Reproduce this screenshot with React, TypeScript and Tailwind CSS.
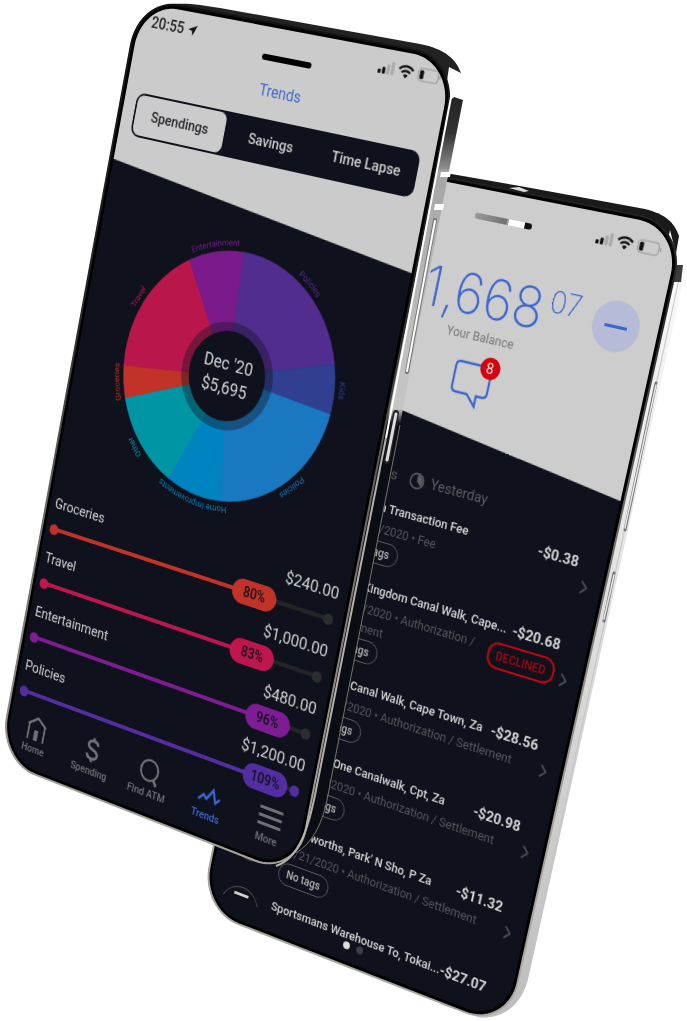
import type { CSSProperties, ReactNode } from "react";
import { ChevronRight } from "lucide-react";

type Point = [number, number];
type Quad = [Point, Point, Point, Point];

const SCREEN_W = 375;
const SCREEN_H = 812;

/** Coefficients that lay a flat screen on four corners: TL, TR, BR, BL. */
function solve([p0, p1, p2, p3]: Quad) {
  const [dx1, dy1] = [p1[0] - p2[0], p1[1] - p2[1]];
  const [dx2, dy2] = [p3[0] - p2[0], p3[1] - p2[1]];
  const sx = p0[0] - p1[0] + p2[0] - p3[0];
  const sy = p0[1] - p1[1] + p2[1] - p3[1];
  const det = dx1 * dy2 - dx2 * dy1;
  const g = (sx * dy2 - dx2 * sy) / det;
  const h = (dx1 * sy - sx * dy1) / det;
  return {
    ax: (p1[0] - p0[0] + g * p1[0]) / SCREEN_W,
    ay: (p1[1] - p0[1] + g * p1[1]) / SCREEN_W,
    aw: g / SCREEN_W,
    bx: (p3[0] - p0[0] + h * p3[0]) / SCREEN_H,
    by: (p3[1] - p0[1] + h * p3[1]) / SCREEN_H,
    bw: h / SCREEN_H,
    cx: p0[0],
    cy: p0[1],
  };
}

function perspective(corners: Quad): string {
  const k = solve(corners);
  return `matrix3d(${[k.ax, k.ay, 0, k.aw, k.bx, k.by, 0, k.bw, 0, 0, 1, 0, k.cx, k.cy, 0, 1].join(",")})`;
}

/** Outline of the rounded glass after projection, as an SVG path. */
function outline(corners: Quad, inset: number, radius: number): string {
  const k = solve(corners);
  const arcs: [number, number, number][] = [
    [inset + radius, inset + radius, 180],
    [SCREEN_W - inset - radius, inset + radius, 270],
    [SCREEN_W - inset - radius, SCREEN_H - inset - radius, 0],
    [inset + radius, SCREEN_H - inset - radius, 90],
  ];
  const points = arcs.flatMap(([cx, cy, start]) =>
    Array.from({ length: 19 }, (_, i) => {
      const a = ((start + i * 5) * Math.PI) / 180;
      const x = cx + radius * Math.cos(a);
      const y = cy + radius * Math.sin(a);
      const w = k.aw * x + k.bw * y + 1;
      return `${((k.ax * x + k.bx * y + k.cx) / w).toFixed(2)} ${((k.ay * x + k.by * y + k.cy) / w).toFixed(2)}`;
    }),
  );
  return `M${points.join("L")}Z`;
}

const FRONT: Quad = [[139, -3], [459, 57], [297, 878], [-2, 761]];
const BACK: Quad = [[352, 158], [687, 224], [508, 1030], [200, 910]];

function Device({ corners, children, label }: { corners: Quad; children: ReactNode; label: string }) {
  const style: CSSProperties = { transform: perspective(corners) };
  return (
    <section aria-label={label} style={style} className="absolute left-0 top-0 h-[812px] w-[375px] origin-top-left p-[4px]">
      <div className="relative flex h-full flex-col overflow-hidden rounded-[44px] bg-[#0f121c]">{children}</div>
    </section>
  );
}

function Bezel({ corners, id }: { corners: Quad; id: string }) {
  return (
    <svg viewBox="0 0 687 1021" className="pointer-events-none absolute left-0 top-0 h-[1021px] w-[687px]" aria-hidden="true" fill="none">
      <defs>
        <linearGradient id={id} x1="0" y1="0" x2="0" y2="1021" gradientUnits="userSpaceOnUse">
          <stop offset="0" stopColor="#111" />
          <stop offset="0.3" stopColor="#2a2a2a" />
          <stop offset="0.5" stopColor="#6d6a65" />
          <stop offset="0.8" stopColor="#a5a29c" />
          <stop offset="1" stopColor="#aaa7a2" />
        </linearGradient>
      </defs>
      <path d={outline(corners, 3, 46)} stroke="#000" strokeWidth="4" />
      <path d={outline(corners, 1, 48)} stroke={`url(#${id})`} strokeWidth="2" />
    </svg>
  );
}

function StatusIcons() {
  return (
    <div className="flex items-center gap-[4px]">
      <svg viewBox="0 0 18 14" className="h-[14px] w-[18px]" aria-hidden="true">
        <rect x="0" y="9" width="3.4" height="4" rx="1" fill="#111" />
        <rect x="4.8" y="6.5" width="3.4" height="6.5" rx="1" fill="#111" />
        <rect x="9.6" y="3.5" width="3.4" height="9.5" rx="1" fill="#aaa" />
        <rect x="14.4" y="0.5" width="3.4" height="12.5" rx="1" fill="#aaa" />
      </svg>
      <svg viewBox="0 0 18 14" className="h-[14px] w-[18px]" aria-hidden="true" fill="none" stroke="#111" strokeWidth="2.2">
        <path d="M1.2 5.2a11 11 0 0 1 15.6 0" />
        <path d="M4.2 8.3a6.8 6.8 0 0 1 9.6 0" />
        <path d="M9 13.6 6.4 10.8a3.8 3.8 0 0 1 5.2 0Z" fill="#111" stroke="none" />
      </svg>
      <svg viewBox="0 0 28 14" className="h-[14px] w-[26px]" aria-hidden="true">
        <rect x="0.6" y="0.6" width="23.5" height="12.8" rx="3.6" fill="none" stroke="#999" strokeWidth="1.1" />
        <rect x="2.4" y="2.4" width="4.6" height="9.2" rx="1.6" fill="#111" />
        <path d="M25.4 4.6v4.8c1.2-.4 1.9-1.3 1.9-2.4s-.7-2-1.9-2.4Z" fill="#999" />
      </svg>
    </div>
  );
}

const SLICES = [
  { name: "Policies", from: -3.5, to: 71.8, color: "#512d8f" },
  { name: "Kids", from: 71.8, to: 94.4, color: "#303f90" },
  { name: "Policies", from: 94.4, to: 170.5, color: "#1a78c0" },
  { name: "Home Improvements", from: 170.5, to: 201.2, color: "#0084c1" },
  { name: "Other", from: 201.2, to: 246.7, color: "#0095a5" },
  { name: "Groceries", from: 246.7, to: 262, color: "#c13329" },
  { name: "Travel", from: 262, to: 326.6, color: "#b9174c" },
  { name: "Entertainment", from: 326.6, to: 356.5, color: "#7b1b8b" },
];

function wedge(from: number, to: number, r: number): string {
  const at = (deg: number) => {
    const a = ((deg - 90) * Math.PI) / 180;
    return `${(r * Math.cos(a)).toFixed(2)} ${(r * Math.sin(a)).toFixed(2)}`;
  };
  return `M0 0L${at(from)}A${r} ${r} 0 0 1 ${at(to)}Z`;
}

function SpendingWheel() {
  return (
    <div className="relative mx-auto -mt-[2px] grid size-[290px] shrink-0 place-items-center">
      <svg viewBox="-145 -145 290 290" className="absolute inset-0" role="img" aria-label="Spending by category">
        <defs>
          <path id="label-ring" d="M0 130A130 130 0 0 1 0 -130A130 130 0 0 1 0 130" />
        </defs>
        {SLICES.map((s) => (
          <path key={s.from} d={wedge(s.from, s.to, 124.5)} fill={s.color} stroke={s.color} strokeWidth="0.8" />
        ))}
        <circle r="54" fill="#0f121c" fillOpacity="0.38" />
        <circle r="45" fill="#0f121c" />
        {SLICES.map((s) => (
          <g key={s.from} transform={`rotate(${(s.from + s.to) / 2})`}>
            <text fill={s.color} fontSize="9" textAnchor="middle">
              <textPath href="#label-ring" startOffset="50%">{s.name}</textPath>
            </text>
          </g>
        ))}
      </svg>
      <p className="relative text-center text-[18px] leading-[24px] text-[#d2d2d2]">
        Dec &apos;20
        <br />
        $5,695
      </p>
    </div>
  );
}

const BUDGETS = [
  { name: "Groceries", amount: "$240.00", pct: "80%", tone: "bg-[#c13329]", width: "w-[81%]", end: "bg-[#2c2d2c]" },
  { name: "Travel", amount: "$1,000.00", pct: "83%", tone: "bg-[#c0164e]", width: "w-[84%]", end: "bg-[#2c2d2c]" },
  { name: "Entertainment", amount: "$480.00", pct: "96%", tone: "bg-[#7d1c93]", width: "w-[93%]", end: "bg-[#2c2d2c]" },
  { name: "Policies", amount: "$1,200.00", pct: "109%", tone: "bg-[#542da0]", width: "w-[96%]", end: "bg-[#542da0]" },
];

function BudgetList() {
  return (
    <ul className="absolute left-[8px] right-[12px] top-[513px]">
      {BUDGETS.map((b) => (
        <li key={b.name} className="h-[58px]">
          <div className="flex items-center justify-between text-[#cfcfcf]">
            <span className="text-[15px] leading-[24px]">{b.name}</span>
            <span className="-mr-[1px] text-[17px] leading-[24px]">{b.amount}</span>
          </div>
          <div className="relative mt-[3px] flex h-[24px] items-center">
            <div className="absolute left-1 right-1 h-[4px] bg-[#232426]" />
            <div className={`absolute right-0 size-[11px] rounded-full ${b.end}`} />
            <div className={`relative flex h-[4px] items-center justify-between ${b.width} ${b.tone}`}>
              <span className={`-ml-[1px] size-[11px] rounded-full ${b.tone}`} />
              <span className={`grid h-[25px] w-[52px] place-items-center rounded-full text-[14px] font-medium text-[#0f121c] ${b.tone}`}>
                {b.pct}
              </span>
            </div>
          </div>
        </li>
      ))}
    </ul>
  );
}

function NavItem({ label, active, children }: { label: string; active?: boolean; children: ReactNode }) {
  return (
    <a
      href="#"
      className={`flex flex-1 flex-col items-center gap-[2px] text-[11px] leading-[14px] font-medium ${active ? "text-[#3a68d8]" : "text-[#707176]"}`}
    >
      <svg viewBox="0 0 30 28" className="h-[28px] w-[30px]" fill="none" stroke="currentColor" strokeWidth="2.2" aria-hidden="true">
        {children}
      </svg>
      {label}
    </a>
  );
}

function TrendsScreen() {
  return (
    <>
      <header className="h-[206px] shrink-0 bg-[#cbcbcb] [clip-path:polygon(0_0,100%_0,100%_100%,0_79%)]">
        <div className="flex items-center justify-between pl-[17px] pr-[10px] pt-[9px]">
          <span className="flex items-center gap-1 text-[16px] leading-[20px] font-medium text-[#222]">
            20:55
            <svg viewBox="0 0 12 12" className="size-[12px]" aria-hidden="true">
              <path d="M11.5.5.8 5.4l4.7 1.1 1.1 4.9Z" fill="#111" />
            </svg>
          </span>
          <StatusIcons />
        </div>
        <div className="mx-auto -mt-[1px] h-[6px] w-[58px] rounded-full bg-black" />
        <h1 className="mt-[18px] text-center text-[16px] leading-[24px] text-[#4069cf]">Trends</h1>
        <div role="tablist" className="mx-[16px] mt-[15px] grid h-[45px] grid-cols-3 rounded-[10px] bg-[#0f121c] p-[2px] text-[15px] font-medium text-[#cbcbcb]">
          <button role="tab" aria-selected="true" className="rounded-[8px] bg-[#cbcbcb] text-[#26272c]">Spendings</button>
          <button role="tab" aria-selected="false">Savings</button>
          <button role="tab" aria-selected="false">Time Lapse</button>
        </div>
      </header>
      <SpendingWheel />
      <BudgetList />
      <nav className="absolute inset-x-0 bottom-[14px] flex pr-[2px]">
        <NavItem label="Home">
          <path d="M5 27V10L15 3l10 7v17" />
          <path d="M3.5 11 15 3l11.5 8" />
          <path d="M12.5 27V16h5v11" fill="currentColor" stroke="none" />
        </NavItem>
        <NavItem label="Spending">
          <path d="M21 9c-.6-2.7-2.8-4.2-6-4.2-3.4 0-5.8 1.7-5.8 4.5 0 6.3 12.1 3 12.1 9.5 0 3-2.7 4.7-6.2 4.7-3.7 0-6-1.7-6.5-4.7M15 1.5V5M15 23.5V27" strokeWidth="3" />
        </NavItem>
        <NavItem label="Find ATM">
          <circle cx="14" cy="13" r="10.5" />
          <path d="m20 21 4.5 6" strokeWidth="3" />
        </NavItem>
        <NavItem label="Trends" active>
          <path d="m3 22 5.5-6 4 3.5L19 9l4.5 12 4.5-5" strokeWidth="2.5" />
        </NavItem>
        <NavItem label="More">
          <path d="M1.5 6.5h27M1.5 14.5h27M1.5 22.5h27" strokeWidth="3.2" />
        </NavItem>
      </nav>
    </>
  );
}

const TRANSACTIONS = [
  { title: "Admin Transaction Fee", detail: "14/12/2020 • Fee", amount: "-$0.38" },
  { title: "Toys Kingdom Canal Walk, Cape...", detail: "12/12/2020 • Authorization / Settlement", amount: "-$20.68", declined: true },
  { title: "Clicks Canal Walk, Cape Town, Za", detail: "12/12/2020 • Authorization / Settlement", amount: "-$28.56" },
  { title: "Game One Canalwalk, Cpt, Za", detail: "11/12/2020 • Authorization / Settlement", amount: "-$20.98" },
  { title: "Woolworths, Park' N Sho, P Za", detail: "11/21/2020 • Authorization / Settlement", amount: "-$11.32" },
];

function BalanceScreen() {
  return (
    <>
      <header className="h-[268px] shrink-0 bg-[#cdcdcd] [clip-path:polygon(0_0,100%_0,100%_100%,0_82%)]">
        <div className="flex justify-end pr-[15px] pt-[18px]">
          <StatusIcons />
        </div>
        <div className="mx-auto -mt-[7px] flex w-[64px] -translate-x-1 overflow-hidden rounded-full bg-linear-to-r from-[#999] to-[#555]">
          <span className="ml-auto h-[6px] w-[20px] border-l-2 border-[#999] bg-white" />
          <span className="h-[6px] w-[8px] bg-[#111]" />
        </div>
        <div className="flex items-start justify-end pr-[20px] pt-[46px] font-['Inter'] text-[#3c66cf]">
          <span className="text-[56px] leading-[56px] font-extralight">$1,668</span>
          <span className="ml-[6px] text-[30px] leading-[34px] font-extralight">07</span>
          <button aria-label="Hide balance" className="ml-[14px] mt-[3px] grid size-[50px] place-items-center rounded-full bg-[#b6bcd8]">
            <span className="h-[3px] w-[24px] bg-[#3c66cf]" />
          </button>
        </div>
        <p className="mt-[2px] pr-[4px] text-center text-[13px] leading-[20px] text-[#77787c]">Your Balance</p>
        <div className="mt-[13px] flex justify-center pr-[4px]">
          <button aria-label="Messages" className="relative">
            <svg viewBox="0 0 46 48" className="h-[48px] w-[46px]" fill="none" stroke="#3c66cf" strokeWidth="2.4" aria-hidden="true">
              <path d="M8 4h30c3.5 0 5 1.8 5 5v21c0 3.4-1.6 5-5 5h-6.5v10.5L21 35H8c-3.5 0-5-1.6-5-5V9c0-3.2 1.6-5 5-5Z" />
            </svg>
            <span className="absolute -right-[6px] -top-[6px] grid size-[22px] place-items-center rounded-full bg-[#d4000b] text-[15px] leading-[20px] text-[#eee]">8</span>
          </button>
        </div>
      </header>
      <div className="mt-[20px] flex items-center pl-[36px] text-[15px] leading-[24px] text-[#5a5c62]">
        <span>Transactions</span>
        <svg viewBox="0 0 16 16" className="ml-[14px] mr-[8px] size-[17px]" aria-hidden="true">
          <circle cx="8" cy="8" r="7.2" fill="none" stroke="currentColor" strokeWidth="1.5" />
          <path d="M8 8V1.8A6.2 6.2 0 0 1 12.4 12.4Z" fill="currentColor" />
        </svg>
        <span>Yesterday</span>
      </div>
      <ul className="mt-[12px]">
        {TRANSACTIONS.map((t) => (
          <li key={t.title} className="flex items-center pb-[14px] pl-[18px] pr-[12px]">
            <div className="flex min-w-0 flex-1 gap-[14px]">
              <span className="mt-[10px] grid size-[48px] shrink-0 place-items-center rounded-full border border-[#5a5c62]">
                <span className="h-[3px] w-[18px] bg-[#d0d0d0]" />
              </span>
              <div className="min-w-0 flex-1">
                <div className="flex items-center justify-between text-[#d4d4d4]">
                  <h2 className="text-[13px] leading-[24px] font-medium whitespace-nowrap">{t.title}</h2>
                  <span className="text-[15px] leading-[24px] font-bold whitespace-nowrap">{t.amount}</span>
                </div>
                <div className="flex justify-between">
                  <p className={`text-[13px] leading-[20px] text-[#55575d] ${t.declined ? "w-[176px]" : "whitespace-nowrap"}`}>{t.detail}</p>
                  {t.declined && (
                    <span className="mt-[3px] grid h-[27px] w-[75px] shrink-0 place-items-center rounded-[12px] border-2 border-[#c1060f] text-[12px] font-medium text-[#a8060f]">
                      DECLINED
                    </span>
                  )}
                </div>
                <span className={`${t.declined ? "-mt-[1px]" : "mt-[2px]"} inline-flex h-[24px] items-center rounded-full border border-[#5a5c62] px-[9px] text-[12px] font-medium text-[#b4b4b4]`}>
                  No tags
                </span>
              </div>
            </div>
            <ChevronRight className="-mr-[4px] size-[22px] shrink-0 text-[#4a4c53]" strokeWidth={2} />
          </li>
        ))}
        <li className="flex gap-[14px] pl-[18px] pr-[30px]">
          <span className="mt-[4px] flex h-[48px] w-[48px] shrink-0 justify-center rounded-full border border-[#5a5c62] pt-[6px]">
            <span className="h-[3px] w-[18px] bg-[#d0d0d0]" />
          </span>
          <div className="flex flex-1 justify-between text-[#d4d4d4]">
            <h2 className="text-[13px] leading-[24px] font-medium whitespace-nowrap">Sportsmans Warehouse To, Tokai...</h2>
            <span className="relative z-10 text-[15px] leading-[24px] font-bold">-$27.07</span>
          </div>
        </li>
      </ul>
      <div className="absolute inset-x-0 bottom-0 flex h-[22px] justify-center gap-[8px] bg-[#0f121c]">
        <span className="size-[8px] rounded-full bg-[#ddd]" />
        <span className="size-[8px] rounded-full bg-[#3c3e46]" />
      </div>
    </>
  );
}

/** Metal band seen beside and above the rear phone's glass. */
function BackFrame() {
  return (
    <svg viewBox="0 0 687 1021" className="absolute left-0 top-0 h-[1021px] w-[687px]" aria-hidden="true">
      <defs>
        <linearGradient id="back-side" x1="0" y1="260" x2="0" y2="1015" gradientUnits="userSpaceOnUse">
          <stop offset="0" stopColor="#fafafa" />
          <stop offset="0.3" stopColor="#e9e9e9" />
          <stop offset="1" stopColor="#bdbdbd" />
        </linearGradient>
      </defs>
      <path d="M440 172 520 186 645 209C665 214 674 222 679 236L668 300 430 190Z" fill="#1a1a1a" />
      <path d="M670 230 678 262 683 282 529 975C523 1005 503 1020 478 1017L440 1004 520 940Z" fill="url(#back-side)" />
      <path d="M681 270 528 975C522 1003 505 1018 480 1017" fill="none" stroke="#c4c4c4" strokeWidth="1" />
      <path d="M673 265h10l-2 17h-10Z" fill="#3c3c3c" />
    </svg>
  );
}

function BackDetails() {
  return (
    <svg viewBox="0 0 687 1021" className="pointer-events-none absolute left-0 top-0 h-[1021px] w-[687px]" aria-hidden="true">
      <path d="M509 188l10-1 10 4-5 1Z" fill="#ddd" />
      <path d="M656 383 625 530M614 573 604 621" fill="none" stroke="#777" strokeWidth="3" strokeLinecap="round" />
      <path d="M656 385 625 528M614 575 604 619" fill="none" stroke="#e4e4e4" strokeWidth="1.5" strokeLinecap="round" />
    </svg>
  );
}

/** Metal band seen beside and above the front phone's glass. */
function FrontFrame() {
  return (
    <svg viewBox="0 0 687 1021" className="absolute left-0 top-0 h-[1021px] w-[687px]" aria-hidden="true">
      <defs>
        <linearGradient id="front-side" x1="0" y1="95" x2="0" y2="860" gradientUnits="userSpaceOnUse">
          <stop offset="0" stopColor="#222" />
          <stop offset="0.05" stopColor="#333" />
          <stop offset="0.095" stopColor="#8a8a8a" />
          <stop offset="0.1" stopColor="#a5a5a5" />
          <stop offset="0.3" stopColor="#bcbcbc" />
          <stop offset="0.41" stopColor="#c6c6c6" />
          <stop offset="0.43" stopColor="#0b0d15" />
          <stop offset="1" stopColor="#0b0d15" />
        </linearGradient>
      </defs>
      <path d="M165 5C185 2 200 5 220 8L420 44C445 49 456 59 461 73L440 90 180 20Z" fill="#222" />
      <path d="M449 67 461 73 460 99 450 98 440 130Z" fill="#fff" />
      <path d="M454 97 463 100 412 360 400 425 326 800C320 832 306 850 290 858L300 800 440 110Z" fill="url(#front-side)" />
      <path d="M400 425 327 800C322 825 312 843 296 853" fill="none" stroke="#77736d" strokeWidth="1" />
    </svg>
  );
}

function FrontDetails() {
  return (
    <svg viewBox="0 0 687 1021" className="pointer-events-none absolute left-0 top-0 h-[1021px] w-[687px]" aria-hidden="true" fill="none">
      <path d="M441 172h10l-1 5h-10ZM435 204h9l-1 6h-9Z" fill="#fff" />
      <path d="M452 92 386 438" stroke="#fff" strokeWidth="2" />
      <path d="M386 438 316 790C309 826 300 858 276 866" stroke="#b4b1ab" strokeWidth="2" />
      <path d="M435 220 407 372" stroke="#777" strokeWidth="4" strokeLinecap="round" />
      <path d="M435 221 407 371" stroke="#fff" strokeWidth="2" strokeLinecap="round" />
      <path d="M396 413 387 461" stroke="#222" strokeWidth="6" strokeLinecap="round" />
      <path d="M396 414 387 460" stroke="#ddd" strokeWidth="3" strokeLinecap="round" />
    </svg>
  );
}

export default function App() {
  return (
    <main className="relative min-h-[1021px] w-full overflow-hidden bg-white font-['Roboto','Liberation_Sans',sans-serif]">
      <BackFrame />
      <Device corners={BACK} label="Balance">
        <BalanceScreen />
      </Device>
      <Bezel corners={BACK} id="back-rim" />
      <BackDetails />
      <FrontFrame />
      <Device corners={FRONT} label="Trends">
        <TrendsScreen />
      </Device>
      <Bezel corners={FRONT} id="front-rim" />
      <FrontDetails />
    </main>
  );
}
